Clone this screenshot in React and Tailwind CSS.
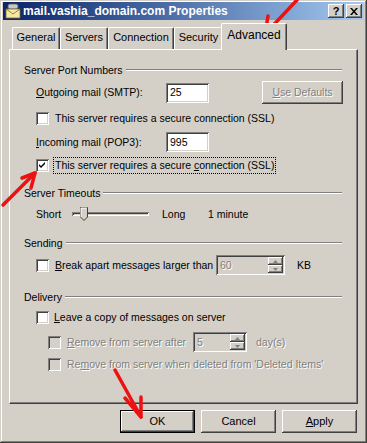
import React from 'react';

const FONT = { fontFamily: '"Liberation Sans", Arial, sans-serif' };

// classic 3D edges
const RAISED = 'shadow-[inset_-1px_-1px_#404040,inset_1px_1px_#ffffff,inset_-2px_-2px_#808080,inset_2px_2px_#d4d0c8]';
const SUNKEN = 'shadow-[inset_1px_1px_#808080,inset_-1px_-1px_#ffffff,inset_2px_2px_#404040,inset_-2px_-2px_#d4d0c8]';
const DIS = 'text-[#808080] [text-shadow:1px_1px_0_#ffffff]';

function Check({ checked, disabled }) {
  return (
    <span className={`relative flex h-[13px] w-[13px] shrink-0 items-center justify-center ${SUNKEN} ${disabled ? 'bg-[#d4d0c8]' : 'bg-white'}`}>
      {checked && (
        <svg width="7" height="7" viewBox="0 0 7 7">
          <path d="M0 2 L2 4 L6 0 L6 2 L2 6 L0 4 Z" fill="#000" />
        </svg>
      )}
    </span>
  );
}

function TextBox({ value, width }) {
  return (
    <div className={`flex h-[20px] items-center bg-white pl-[4px] text-black ${SUNKEN}`} style={{ width }}>
      {value}
    </div>
  );
}

function Spin({ value, width }) {
  return (
    <div className={`flex h-[20px] items-stretch bg-[#d4d0c8] p-[2px] ${SUNKEN}`} style={{ width }}>
      <span className={`flex flex-1 items-center pl-[2px] ${DIS}`}>{value}</span>
      <div className="flex w-[15px] flex-col">
        {[0, 1].map((i) => (
          <div key={i} className={`flex flex-1 items-center justify-center bg-[#d4d0c8] ${RAISED}`}>
            <svg width="5" height="3" viewBox="0 0 5 3">
              <path d={i === 0 ? 'M2.5 0 L5 3 L0 3 Z' : 'M0 0 L5 0 L2.5 3 Z'} fill="#808080" />
            </svg>
          </div>
        ))}
      </div>
    </div>
  );
}

function GroupLabel({ children, mt }) {
  return (
    <div className={`ml-[14px] mr-[15px] flex h-[20px] items-center ${mt}`}>
      <span className="pr-[3px]">{children}</span>
      <div className="h-[2px] flex-1 border-t border-b border-t-[#808080] border-b-white" />
    </div>
  );
}

function Btn({ children, def, disabled, w = 'w-[75px]' }) {
  return (
    <div className={`${w} h-[23px] ${def ? 'border border-black' : ''}`}>
      <div className={`flex h-full w-full items-center justify-center bg-[#d4d0c8] ${RAISED} ${disabled ? DIS : ''}`}>
        {children}
      </div>
    </div>
  );
}

const TABS = [
  { label: 'General', w: 'w-[48px]' },
  { label: 'Servers', w: 'w-[48px]' },
  { label: 'Connection', w: 'w-[66px]' },
  { label: 'Security', w: 'w-[49px]' },
];

export default function App() {
  return (
    <div
      className="relative h-[443px] w-[367px] overflow-hidden bg-[#d4d0c8] px-[3px] pt-[2px] text-[10.5px] leading-[13px] text-black shadow-[inset_-1px_-1px_#404040,inset_1px_1px_#d4d0c8,inset_-2px_-2px_#808080,inset_2px_2px_#ffffff]"
      style={FONT}
    >
      {/* title bar */}
      <div className="flex h-[18px] items-center bg-gradient-to-r from-[#0a246a] to-[#a6caf0] pl-[2px] pr-[2px]">
        <svg width="16" height="16" viewBox="0 0 16 16" className="shrink-0">
          <rect x="3" y="1" width="10" height="5" rx="2" fill="#c8c8c8" stroke="#606060" strokeWidth="0.8" />
          <rect x="1" y="6" width="14" height="9" fill="#f8e8a0" stroke="#7a6a30" strokeWidth="0.8" />
          <path d="M1 6 L8 11 L15 6" fill="none" stroke="#7a6a30" strokeWidth="0.8" />
        </svg>
        <span className="ml-[2px] flex-1 text-[12px] font-bold text-white">mail.vashia_domain.com Properties</span>
        <div className="flex gap-[2px]">
          <div className={`flex h-[14px] w-[16px] items-center justify-center bg-[#d4d0c8] text-[11px] font-bold ${RAISED}`}>?</div>
          <div className={`flex h-[14px] w-[16px] items-center justify-center bg-[#d4d0c8] ${RAISED}`}>
            <svg width="8" height="7" viewBox="0 0 8 7">
              <path d="M0 0 L2 0 L4 2.5 L6 0 L8 0 L5 3.5 L8 7 L6 7 L4 4.5 L2 7 L0 7 L3 3.5 Z" fill="#000" />
            </svg>
          </div>
        </div>
      </div>

      {/* tabs */}
      <div className="ml-[6px] mt-[3px] flex h-[26px] items-end pl-[3px] text-[11px]">
        {TABS.map((t) => (
          <div
            key={t.label}
            className={`${t.w} flex h-[22px] items-center justify-center rounded-t-[2px] border-l border-t border-r border-l-white border-t-white border-r-[#404040] pb-[2px] shadow-[inset_-1px_0_#808080]`}
          >
            {t.label}
          </div>
        ))}
        <div className="relative z-10 -mb-px -ml-[2px] flex h-[27px] w-[66px] items-center justify-center rounded-t-[2px] border-l border-t border-r border-l-white border-t-white border-r-[#404040] bg-[#d4d0c8] pb-[3px] text-[12px] shadow-[inset_-1px_0_#808080]">
          Advanced
        </div>
      </div>

      {/* panel */}
      <div className="mx-[6px] h-[355px] border border-l-white border-t-white border-r-[#404040] border-b-[#404040] shadow-[inset_-1px_-1px_#808080]">
        <GroupLabel mt="mt-[10px]">Server Port Numbers</GroupLabel>

        <div className="ml-[26px] mt-[2px] flex h-[21px] items-center">
          <span className="w-[130px]"><u>O</u>utgoing mail (SMTP):</span>
          <TextBox value="25" width={43} />
          <div className="ml-[53px]">
            <Btn disabled w="w-[81px]"><span><u>U</u>se Defaults</span></Btn>
          </div>
        </div>

        <div className="ml-[26px] mt-[5px] flex h-[20px] items-center gap-[6px]">
          <Check />
          <span>This server requires a secure connection (SSL)</span>
        </div>

        <div className="ml-[26px] mt-[4px] flex h-[20px] items-center">
          <span className="w-[130px]"><u>I</u>ncoming mail (POP3):</span>
          <TextBox value="995" width={43} />
        </div>

        <div className="ml-[26px] mt-[3px] flex h-[20px] items-center gap-[4px]">
          <Check checked />
          <span className="border border-dotted border-black px-[1px] py-[1px]">
            This server requires a secure <u>c</u>onnection (SSL)
          </span>
        </div>

        <GroupLabel mt="mt-[8px]">Server Timeouts</GroupLabel>

        <div className="ml-[26px] mt-[1px] flex h-[20px] items-center">
          <span className="w-[36px]">Short</span>
          <div className="relative h-[16px] w-[77px]">
            <div className="absolute left-0 right-0 top-[6px] h-[4px] shadow-[inset_1px_1px_#808080,inset_-1px_-1px_#ffffff,inset_2px_2px_#404040]" />
            <svg width="8" height="14" viewBox="0 0 8 14" className="absolute left-[8px] top-[1px]">
              <path d="M0.5 0.5 H7.5 V10 L4 13.5 L0.5 10 Z" fill="#d4d0c8" stroke="#404040" />
              <path d="M1 10 V1 H7" fill="none" stroke="#ffffff" />
            </svg>
          </div>
          <span className="ml-[13px] w-[46px]">Long</span>
          <span>1 minute</span>
        </div>

        <GroupLabel mt="mt-[9px]">Sending</GroupLabel>

        <div className="ml-[26px] mt-[2px] flex h-[20px] items-center">
          <Check />
          <span className="ml-[6px] w-[161px] whitespace-nowrap"><u>B</u>reak apart messages larger than</span>
          <Spin value="60" width={69} />
          <span className="ml-[12px]">KB</span>
        </div>

        <GroupLabel mt="mt-[12px]">Delivery</GroupLabel>

        <div className="ml-[26px] mt-0 flex h-[20px] items-center gap-[5px]">
          <Check />
          <span><u>L</u>eave a copy of messages on server</span>
        </div>

        <div className="ml-[38px] mt-[5px] flex h-[20px] items-center">
          <Check disabled />
          <span className={`ml-[6px] w-[126px] whitespace-nowrap ${DIS}`}><u>R</u>emove from server after</span>
          <Spin value="5" width={54} />
          <span className={`ml-[9px] ${DIS}`}>day(s)</span>
        </div>

        <div className="ml-[38px] mt-[2px] flex h-[20px] items-center">
          <Check disabled />
          <span className={`ml-[6px] ${DIS}`}>Re<u>m</u>ove from server when deleted from 'Deleted Items'</span>
        </div>
      </div>

      {/* buttons */}
      <div className="mr-[7px] mt-[6px] flex justify-end gap-[6px] text-[11px]">
        <Btn def>OK</Btn>
        <Btn>Cancel</Btn>
        <Btn><span><u>A</u>pply</span></Btn>
      </div>

      {/* red annotation arrows */}
      <svg width="367" height="443" viewBox="0 0 367 443" className="pointer-events-none absolute left-0 top-0">
        <g stroke="#ee1111" strokeWidth="3.5" strokeLinecap="round" strokeLinejoin="round" fill="none">
          <path d="M297 0 L265 34" />
          <path d="M268 16 L265 34 L283 26" />
          <path d="M3 205 L35 173" />
          <path d="M22 178 L35 173 L31 188" />
          <path d="M115 370 L141 417" />
          <path d="M125 398 L141 417 L141 397" />
        </g>
      </svg>
    </div>
  );
}
